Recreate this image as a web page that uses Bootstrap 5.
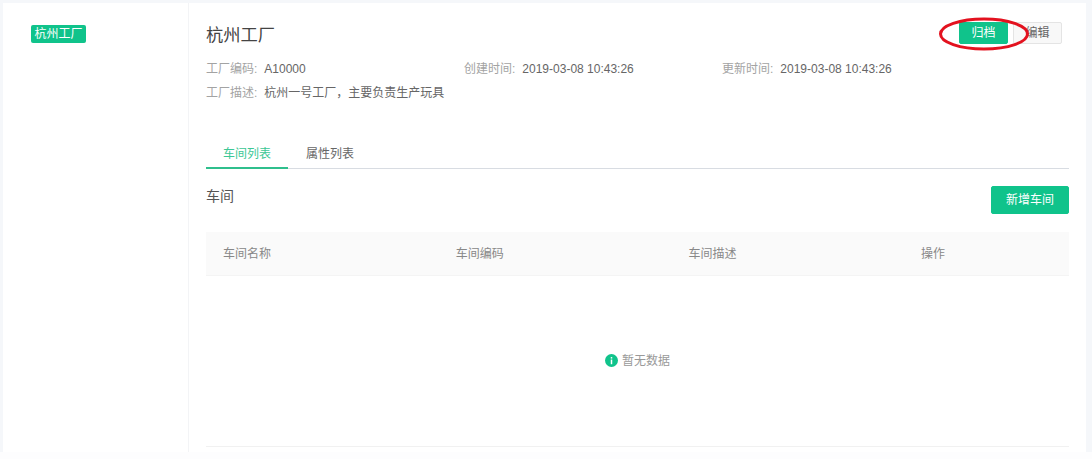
<!DOCTYPE html>
<html lang="zh-CN">
<head>
<meta charset="utf-8">
<title>杭州工厂</title>
<link href="https://cdn.jsdelivr.net/npm/bootstrap@5.3.0/dist/css/bootstrap.min.css" rel="stylesheet">
<style>
html,body{height:459px;overflow:hidden}
body{background:#fdfdfe;font-family:"Liberation Sans","Noto Sans CJK SC",sans-serif;font-size:12px;color:#555}
.page-band{background:#f5f7fa;height:452px;padding:3px 6px 0 3px}
.sheet{background:#fff;height:449px;position:relative}
.side-pane{width:186px;border-right:1px solid #f3f4f6;padding:22px 0 0 28px;flex:none}
.tree-tag{display:inline-block;background:#10c38b;color:#fff;border-radius:2px;height:18px;line-height:18px;padding:0 3.5px;font-size:12px}
.main-pane{padding:0 17px;flex:1;min-width:0}
.head-row{height:42px;padding-top:19px}
.page-title{font-size:17.25px;line-height:26px;color:#444;margin:0;font-weight:400}
.btn-archive,.btn-edit{width:49px;height:22px;padding:0 0 1px;font-size:12px;line-height:18px;border-radius:2px}
.btn-archive{background:#10c38b;border:1px solid #10c38b;color:#fff}
.btn-edit{background:#f8f8f8;border:1px solid #e4e4e4;color:#666;margin-left:5px;margin-right:7px}
.meta-row{height:24px;line-height:24px}
.meta-first{margin-top:12px}
.meta-cell{width:258px;flex:none}
.meta-label{color:#a3a3a3;margin-right:7px}
.meta-value{color:#666}
.tab-strip{margin-top:35px;height:29px;border-bottom:1px solid #d8dce2;display:flex}
.tab-item{height:29px;line-height:28px;text-align:center;color:#666}
.tab-on{width:82px;color:#3cc795;border-bottom:2px solid #2fbf8d}
.tab-off{width:84px}
.sect-row{padding-top:17px;height:63px}
.sect-title{font-size:14px;line-height:20px;color:#555}
.btn-add{width:78px;height:28px;padding:0;font-size:12px;line-height:26px;background:#10c38b;border:1px solid #10c38b;color:#fff;border-radius:2px}
.data-table{width:863px;table-layout:fixed;margin:0;border-collapse:collapse}
.data-table th{background:#fafafa;font-weight:400;color:#888;height:43px;padding:1px 0 0 17px;border-bottom:1px solid #f4f4f4;vertical-align:middle}
.w-col{width:232.7px}
.empty-box{height:171px;width:863px;border-bottom:1px solid #f1f1f1;color:#999;font-size:12px}
.info-dot{width:13px;height:13px;flex:none}
.mark-ring{position:absolute;left:933px;top:13px;width:96px;height:36px;pointer-events:none}
</style>
</head>
<body>
<div class="page-band">
<div class="sheet d-flex">
  <aside class="side-pane"><span class="tree-tag">杭州工厂</span></aside>
  <main class="main-pane">
    <div class="head-row d-flex justify-content-between align-items-start">
      <h1 class="page-title">杭州工厂</h1>
      <div class="d-flex">
        <button type="button" class="btn btn-archive">归档</button>
        <button type="button" class="btn btn-edit">编辑</button>
      </div>
    </div>
    <div class="meta-row meta-first d-flex">
      <div class="meta-cell"><span class="meta-label">工厂编码:</span><span class="meta-value">A10000</span></div>
      <div class="meta-cell"><span class="meta-label">创建时间:</span><span class="meta-value">2019-03-08 10:43:26</span></div>
      <div class="meta-cell"><span class="meta-label">更新时间:</span><span class="meta-value">2019-03-08 10:43:26</span></div>
    </div>
    <div class="meta-row d-flex">
      <div><span class="meta-label">工厂描述:</span><span class="meta-value">杭州一号工厂&#65292;主要负责生产玩具</span></div>
    </div>
    <div class="tab-strip">
      <div class="tab-item tab-on">车间列表</div>
      <div class="tab-item tab-off">属性列表</div>
    </div>
    <div class="sect-row d-flex justify-content-between align-items-start">
      <div class="sect-title">车间</div>
      <button type="button" class="btn btn-add">新增车间</button>
    </div>
    <table class="data-table">
      <thead><tr><th class="w-col">车间名称</th><th class="w-col">车间编码</th><th class="w-col">车间描述</th><th>操作</th></tr></thead>
    </table>
    <div class="empty-box d-flex align-items-center justify-content-center gap-1">
      <svg class="info-dot" viewBox="0 0 14 14" aria-hidden="true"><circle cx="7" cy="7" r="7" fill="#10c38b"/><rect x="6.2" y="6" width="1.6" height="5" fill="#fff"/><rect x="6.2" y="3.3" width="1.6" height="1.6" fill="#fff"/></svg>
      <span>暂无数据</span>
    </div>
  </main>
  <svg class="mark-ring" viewBox="0 0 96 36" aria-hidden="true"><ellipse cx="48" cy="18" rx="43.5" ry="15" fill="none" stroke="#e3121f" stroke-width="3"/></svg>
</div>
</div>
</body>
</html>
